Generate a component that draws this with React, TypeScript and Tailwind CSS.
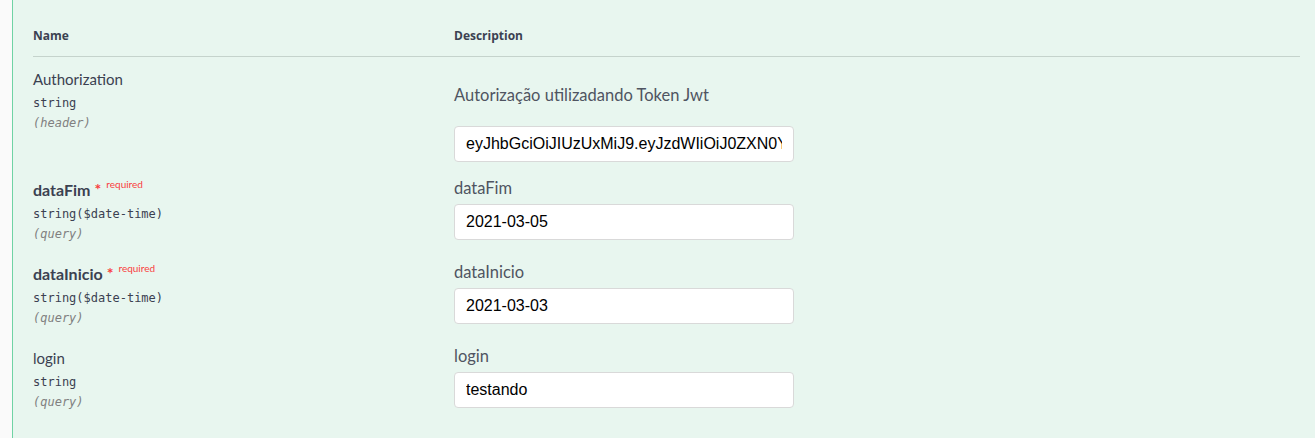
import React from "react";

type Param = {
  name: string;
  type: string;
  place: string;
  required?: boolean;
  label: string;
  value: string;
  first?: boolean;
};

const params: Param[] = [
  {
    name: "Authorization",
    type: "string",
    place: "(header)",
    label: "Autorização utilizadando Token Jwt",
    value: "eyJhbGciOiJIUzUxMiJ9.eyJzdWIiOiJ0ZXN0YW5kbyIsImV4cCI6MTYxNTAwMDAwMH0",
    first: true,
  },
  { name: "dataFim", type: "string($date-time)", place: "(query)", required: true, label: "dataFim", value: "2021-03-05" },
  { name: "dataInicio", type: "string($date-time)", place: "(query)", required: true, label: "dataInicio", value: "2021-03-03" },
  { name: "login", type: "string", place: "(query)", label: "login", value: "testando" },
];

function ParamRow({ p }: { p: Param }) {
  return (
    <div className="grid grid-cols-[421px_1fr] items-start">
      {/* name column */}
      <div className="pt-[11px]">
        <div className="flex items-center h-[22px] leading-[22px] font-['Lato',sans-serif]">
          <span className={p.required ? "text-[16px] font-bold text-[#3b4151]" : "text-[15px] text-[#3b4151]"}>
            {p.name}
          </span>
          {p.required && (
            <span className="ml-[4px] -mt-[6px] flex items-start text-[#f93e3e]">
              <span className="text-[16px] leading-[15px] mt-[3px] font-bold">*</span>
              <span className="ml-[5px] text-[10px] leading-[12px]">required</span>
            </span>
          )}
        </div>
        <div className="mt-[4px] h-[18px] leading-[18px] text-[12px] text-[#3b4151] font-['DejaVu_Sans_Mono',monospace]">
          {p.type}
        </div>
        <div className="mt-[2px] h-[18px] leading-[18px] text-[12px] italic text-[#808080] font-['DejaVu_Sans_Mono',monospace]">
          {p.place}
        </div>
      </div>

      {/* description column */}
      <div className={p.first ? "pt-[26px] pb-[6px]" : "pt-[8px] pb-[12px]"}>
        <div className="h-[24px] leading-[24px] text-[16.5px] text-[#4f5461] font-['Lato',sans-serif]">{p.label}</div>
        <input
          readOnly
          value={p.value}
          className={`${p.first ? "mt-[19px]" : "mt-[4px]"} block w-[340px] h-[36px] rounded-[4px] border border-[#d9d9d9] bg-white px-[11px] text-[16px] text-black outline-none font-['Liberation_Sans',Arial,sans-serif]`}
        />
      </div>
    </div>
  );
}

export default function App() {
  return (
    <div className="min-h-[438px] bg-[#fafafa] pl-[12px]">
      <div className="min-h-[438px] border-l-[1.5px] border-[#6fd3a4] bg-[#e8f6ef] pl-[20px] pr-[15px]">
        <div className="grid grid-cols-[421px_1fr] h-[57px] border-b border-[#c5d3cc] pt-[28px]">
          <div className="text-[12px] leading-[16px] font-bold text-[#3b4151] font-['Open_Sans',sans-serif]">Name</div>
          <div className="text-[12px] leading-[16px] font-bold text-[#3b4151] font-['Open_Sans',sans-serif]">Description</div>
        </div>
        {params.map((p) => (
          <ParamRow key={p.name} p={p} />
        ))}
      </div>
    </div>
  );
}
